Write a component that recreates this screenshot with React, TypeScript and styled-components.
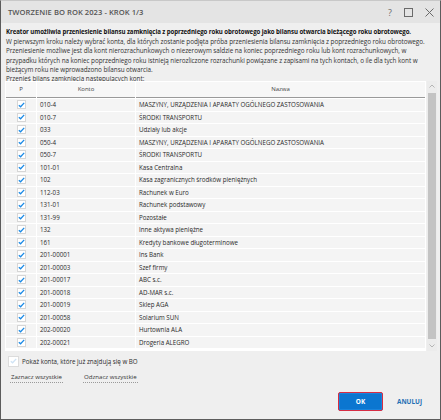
import styled, { createGlobalStyle } from "styled-components";

const GlobalStyle = createGlobalStyle`
  html, body {
    margin: 0;
    padding: 0;
    background: #ffffff;
  }
  * {
    box-sizing: border-box;
  }
`;

const rows: [string, string][] = [
  ["010-4", "MASZYNY, URZĄDZENIA I APARATY OGÓLNEGO ZASTOSOWANIA"],
  ["010-7", "ŚRODKI TRANSPORTU"],
  ["033", "Udziały lub akcje"],
  ["050-4", "MASZYNY, URZĄDZENIA I APARATY OGÓLNEGO ZASTOSOWANIA"],
  ["050-7", "ŚRODKI TRANSPORTU"],
  ["101-01", "Kasa Centralna"],
  ["102", "Kasa zagranicznych środków pieniężnych"],
  ["112-03", "Rachunek w Euro"],
  ["131-01", "Rachunek podstawowy"],
  ["131-99", "Pozostałe"],
  ["132", "Inne aktywa pieniężne"],
  ["161", "Kredyty bankowe długoterminowe"],
  ["201-00001", "Ins Bank"],
  ["201-00003", "Szef firmy"],
  ["201-00017", "ABC s.c."],
  ["201-00018", "AD-MAR s.c."],
  ["201-00019", "Sklep AGA"],
  ["201-00058", "Solarium SUN"],
  ["202-00020", "Hurtownia ALA"],
  ["202-00021", "Drogeria ALEGRO"],
];

const Window = styled.div`
  width: 441px;
  height: 420px;
  background: #efefef;
  border: 1px solid #5c5c5c;
  border-top-color: #c8c8c8;
  display: flex;
  flex-direction: column;
  font-family: "Open Sans", "Noto Sans", sans-serif;
  color: #2b2b2b;
`;

const TitleBar = styled.div`
  height: 22px;
  flex: none;
  background: #e4e4e4;
  display: flex;
  align-items: center;
  padding: 0 6px 0 7px;
`;

const Title = styled.div`
  flex: 1;
  font-size: 7.6px;
  font-weight: 600;
  color: #555;
  letter-spacing: 0.05px;
`;

const TitleIcons = styled.div`
  display: flex;
  align-items: center;
  gap: 12px;
  color: #6a6a6a;
`;

const Body = styled.div`
  flex: 1;
  display: flex;
  flex-direction: column;
  padding: 4px 3px 0 4px;
  min-height: 0;
`;

const Intro = styled.div`
  font-size: 6.35px;
  line-height: 9.5px;
  padding-left: 1px;
  white-space: nowrap;
  letter-spacing: -0.05px;
  color: #333;
`;

const Lead = styled.div`
  font-size: 6.1px;
  font-weight: 700;
  color: #111;
  letter-spacing: -0.07px;
`;

const Label = styled.div`
  font-size: 6.3px;
  padding-left: 1px;
  height: 6px;
  line-height: 7px;
  color: #333;
`;

const TableArea = styled.div`
  display: flex;
  height: 270px;
`;

const Table = styled.div`
  flex: 1;
  display: grid;
  grid-template-columns: 30px 98px 1fr;
  grid-auto-rows: 11.5px;
  grid-template-rows: 16.5px;
  gap: 1px;
  background: #ffffff;
  padding: 1px;
  align-content: start;
  font-size: 6.2px;
`;

const HeadCell = styled.div`
  background: #f7f7f7;
  border-bottom: 1px solid #9a9a9a;
  display: flex;
  align-items: center;
  justify-content: center;
  color: #444;
  font-size: 6px;
`;

const Cell = styled.div<{ $center?: boolean }>`
  background: #f4f4f4;
  display: flex;
  align-items: center;
  justify-content: ${(p) => (p.$center ? "center" : "flex-start")};
  padding-left: ${(p) => (p.$center ? "0" : "3px")};
  color: #2a2a2a;
  white-space: nowrap;
  overflow: hidden;
`;

const Box = styled.div<{ $faint?: boolean; $size: number }>`
  width: ${(p) => p.$size}px;
  height: ${(p) => p.$size}px;
  background: #fff;
  border: 1px solid ${(p) => (p.$faint ? "#dcdcdc" : "#d6d6d6")};
  display: flex;
  align-items: center;
  justify-content: center;
  flex: none;
`;

const ScrollBar = styled.div`
  width: 10px;
  margin-left: 1px;
  display: flex;
  flex-direction: column;
  align-items: center;
  background: #ececec;
`;

const Arrow = styled.div`
  height: 10px;
  display: flex;
  align-items: center;
  justify-content: center;
`;

const Thumb = styled.div`
  flex: 1;
  width: 8px;
  background: #c3c3c3;
  margin: 2px 0;
`;

const ShowRow = styled.div`
  display: flex;
  align-items: center;
  gap: 3px;
  margin-top: 5px;
  padding-left: 3px;
  font-size: 6.2px;
`;

const Links = styled.div`
  display: flex;
  gap: 20px;
  margin-top: 5px;
  padding-left: 5px;
`;

const LinkButton = styled.span`
  font-size: 6.1px;
  color: #333;
  border-bottom: 1px dotted #9a9a9a;
  padding: 0 1px 1px;
`;

const Footer = styled.div`
  margin-top: auto;
  height: 30px;
  display: flex;
  align-items: center;
  justify-content: flex-end;
  gap: 14px;
  padding: 0 15px 5px 0;
`;

const OkButton = styled.button`
  width: 45px;
  height: 19px;
  background: #0b76d0;
  border: 1px solid #d62d44;
  border-radius: 2px;
  box-shadow: inset 0 0 0 1px #1a84dc;
  color: #fff;
  font-family: inherit;
  font-weight: 700;
  font-size: 6.4px;
  padding: 0;
`;

const CancelButton = styled.span`
  font-size: 6.4px;
  font-weight: 700;
  color: #1f6fb4;
`;

function Check({ color }: { color: string }) {
  return (
    <svg width="7" height="6" viewBox="0 0 7 6">
      <path
        d="M0.8 3.2 L2.6 4.8 L6.2 0.9"
        fill="none"
        stroke={color}
        strokeWidth="1.3"
      />
    </svg>
  );
}

export default function App() {
  return (
    <>
      <GlobalStyle />
      <Window>
        <TitleBar>
          <Title>TWORZENIE BO ROK 2023 - KROK 1/3</Title>
          <TitleIcons>
            <span style={{ fontSize: 9 }}>?</span>
            <svg width="9" height="9" viewBox="0 0 9 9">
              <rect x="0.5" y="0.5" width="8" height="8" fill="none" stroke="#6a6a6a" />
            </svg>
            <svg width="9" height="9" viewBox="0 0 9 9">
              <path d="M0.5 0.5 L8.5 8.5 M8.5 0.5 L0.5 8.5" stroke="#6a6a6a" strokeWidth="1" />
            </svg>
          </TitleIcons>
        </TitleBar>
        <Body>
          <Intro>
            <Lead>
              Kreator umożliwia przeniesienie bilansu zamknięcia z poprzedniego roku obrotowego jako bilansu otwarcia bieżącego roku obrotowego.
            </Lead>
            <div>W pierwszym kroku należy wybrać konta, dla których zostanie podjęta próba przeniesienia bilansu zamknięcia z poprzedniego roku obrotowego.</div>
            <div>Przeniesienie możliwe jest dla kont nierozrachunkowych o niezerowym saldzie na koniec poprzedniego roku lub kont rozrachunkowych, w</div>
            <div>przypadku których na koniec poprzedniego roku istnieją nierozliczone rozrachunki powiązane z zapisami na tych kontach, o ile dla tych kont w</div>
            <div>bieżącym roku nie wprowadzono bilansu otwarcia.</div>
          </Intro>
          <Label>Przenieś bilans zamknięcia następujących kont:</Label>
          <TableArea>
            <Table>
              <HeadCell>P</HeadCell>
              <HeadCell>Konto</HeadCell>
              <HeadCell>Nazwa</HeadCell>
              {rows.map(([konto, nazwa]) => (
                <div key={konto} style={{ display: "contents" }}>
                  <Cell $center>
                    <Box $size={9}>
                      <Check color="#1b8ae6" />
                    </Box>
                  </Cell>
                  <Cell>{konto}</Cell>
                  <Cell>{nazwa}</Cell>
                </div>
              ))}
            </Table>
            <ScrollBar>
              <Arrow>
                <svg width="6" height="4" viewBox="0 0 6 4">
                  <path d="M0.5 3.5 L3 1 L5.5 3.5" fill="none" stroke="#b5b5b5" />
                </svg>
              </Arrow>
              <Thumb />
              <Arrow>
                <svg width="6" height="4" viewBox="0 0 6 4">
                  <path d="M0.5 0.5 L3 3 L5.5 0.5" fill="none" stroke="#b5b5b5" />
                </svg>
              </Arrow>
            </ScrollBar>
          </TableArea>
          <ShowRow>
            <Box $size={11} $faint>
              <Check color="#cfe3f5" />
            </Box>
            Pokaż konta, które już znajdują się w BO
          </ShowRow>
          <Links>
            <LinkButton>Zaznacz wszystkie</LinkButton>
            <LinkButton>Odznacz wszystkie</LinkButton>
          </Links>
          <Footer>
            <OkButton>OK</OkButton>
            <CancelButton>ANULUJ</CancelButton>
          </Footer>
        </Body>
      </Window>
    </>
  );
}
